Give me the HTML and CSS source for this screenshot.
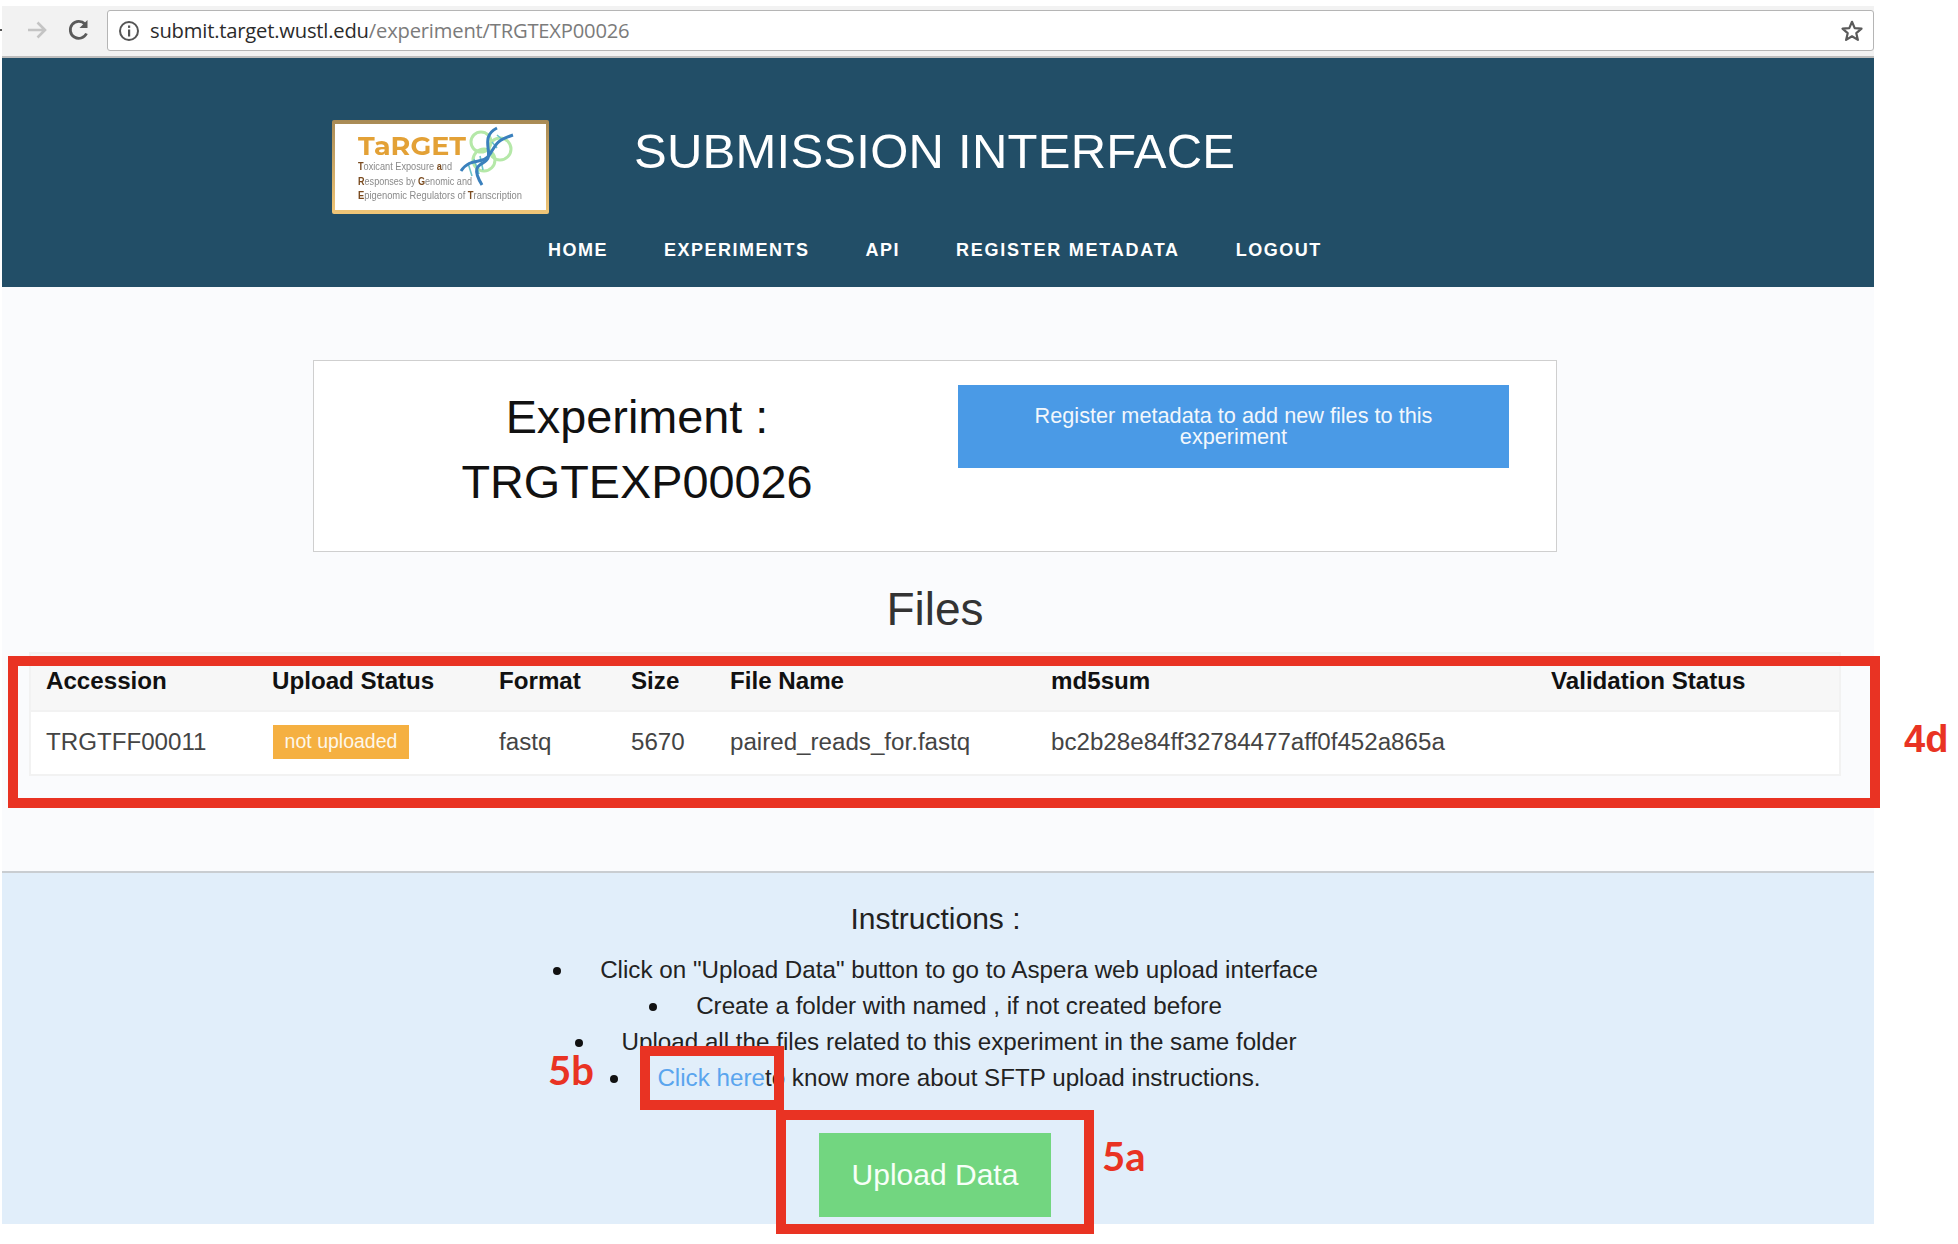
FILE: index.html
```html
<!DOCTYPE html>
<html lang="en">
<head>
<meta charset="utf-8">
<title>Submission Interface</title>
<link rel="stylesheet" href="styles.css">
</head>
<body>
<div class="page">
  <div class="chrome">
    <span class="chrome-dot"></span>
    <svg class="chrome-icon" width="26" height="26" viewBox="0 0 26 26"><path d="M4 13h17M13.500 5.500 21 13l-7.500 7.500" fill="none" stroke="#c4c4c4" stroke-width="2.600"/></svg>
    <svg class="chrome-icon reload" width="26" height="26" viewBox="0 0 26 26"><path d="M20.500 16.500A8.500 8.500 0 1 1 19 7" fill="none" stroke="#5a5a5a" stroke-width="2.800"/><path d="M21.500 3v8h-8z" fill="#5a5a5a"/></svg>
    <div class="omnibox">
      <svg class="info" width="22" height="22" viewBox="0 0 22 22"><circle cx="11" cy="11" r="9" fill="none" stroke="#555" stroke-width="2"/><rect x="10" y="9.500" width="2.200" height="7" fill="#555"/><rect x="10" y="5.500" width="2.200" height="2.400" fill="#555"/></svg>
      <span class="url"><span class="url-host">submit.target.wustl.edu</span>/experiment/TRGTEXP00026</span>
      <svg class="star" width="24" height="24" viewBox="0 0 24 24"><path d="M12 2.800l2.700 6.300 6.800.6-5.200 4.500 1.600 6.700-5.900-3.600-5.900 3.600 1.600-6.700-5.200-4.500 6.800-.6z" fill="none" stroke="#5a5a5a" stroke-width="2.200" stroke-linejoin="round"/></svg>
    </div>
  </div>

  <header class="site-header">
    <div class="brand">
      <svg class="logo" width="217" height="94" viewBox="0 0 217 94">
        <defs><linearGradient id="frame" x1="0" y1="0" x2="0" y2="1"><stop offset="0" stop-color="#a88a55"/><stop offset="1" stop-color="#f0c678"/></linearGradient></defs>
        <rect width="217" height="94" rx="2" fill="url(#frame)"/>
        <rect x="3" y="4" width="211" height="86" fill="#fff"/>
        <g fill="none" stroke="#b5e8a8" stroke-width="3">
          <circle cx="149" cy="22" r="10"/><circle cx="168" cy="29" r="11"/><circle cx="152" cy="40" r="11"/>
        </g>
        <g stroke="#6cc3ca" stroke-width="1.600">
          <path d="M136 43l4 13M142 39l5 15M148 36l3 14M155 28l5 6M160 22l5 6M165 15l6 5"/>
        </g>
        <g fill="none" stroke="#3a80bd" stroke-width="3">
          <path d="M129 51C139 36 151 46 158 34S166 20 181 15"/>
          <path d="M165 8C149 16 159 30 156 38S136 42 150 65"/>
        </g>
        <text class="logo-name" x="26" y="35" textLength="108" lengthAdjust="spacingAndGlyphs">TaRGET</text>
        <text class="logo-line" x="26" y="50" textLength="94" lengthAdjust="spacingAndGlyphs"><tspan class="logo-cap">T</tspan>oxicant Exposure <tspan class="logo-cap">a</tspan>nd</text>
        <text class="logo-line" x="26" y="65" textLength="114" lengthAdjust="spacingAndGlyphs"><tspan class="logo-cap">R</tspan>esponses by <tspan class="logo-cap">G</tspan>enomic and</text>
        <text class="logo-line" x="26" y="79" textLength="164" lengthAdjust="spacingAndGlyphs"><tspan class="logo-cap">E</tspan>pigenomic Regulators of <tspan class="logo-cap">T</tspan>ranscription</text>
      </svg>
      <h1 class="site-title">SUBMISSION INTERFACE</h1>
    </div>
    <nav class="site-nav">
      <a class="nav-link">HOME</a>
      <a class="nav-link">EXPERIMENTS</a>
      <a class="nav-link">API</a>
      <a class="nav-link nav-link-wide">REGISTER METADATA</a>
      <a class="nav-link">LOGOUT</a>
    </nav>
  </header>

  <main class="content">
    <section class="exp-card">
      <h2 class="exp-title">Experiment :<br>TRGTEXP00026</h2>
      <a class="register-btn">Register metadata to add new files to this experiment</a>
    </section>

    <h2 class="files-title">Files</h2>

    <table class="files-table">
      <colgroup>
        <col class="c-acc"><col class="c-status"><col class="c-format"><col class="c-size"><col class="c-name"><col class="c-md5"><col class="c-valid">
      </colgroup>
      <thead>
        <tr><th>Accession</th><th>Upload Status</th><th>Format</th><th>Size</th><th>File Name</th><th>md5sum</th><th>Validation Status</th></tr>
      </thead>
      <tbody>
        <tr><td>TRGTFF00011</td><td><span class="badge">not uploaded</span></td><td>fastq</td><td>5670</td><td>paired_reads_for.fastq</td><td>bc2b28e84ff32784477aff0f452a865a</td><td></td></tr>
      </tbody>
    </table>
  </main>

  <section class="instructions">
    <h3 class="ins-title">Instructions :</h3>
    <ul class="ins-list">
      <li class="ins-item">Click on "Upload Data" button to go to Aspera web upload interface</li>
      <li class="ins-item">Create a folder with named , if not created before</li>
      <li class="ins-item">Upload all the files related to this experiment in the same folder</li>
      <li class="ins-item"><a class="ins-link">Click here</a>to know more about SFTP upload instructions.</li>
    </ul>
    <a class="upload-btn">Upload Data</a>
  </section>
</div>

<div class="mark mark-4d"></div>
<div class="mark mark-5b"></div>
<div class="mark mark-5a"></div>
<span class="mark-label label-4d">4d</span>
<span class="mark-label label-5b">5b</span>
<span class="mark-label label-5a">5a</span>
</body>
</html>
```
FILE: styles.css
```css
* { box-sizing: border-box; }
html, body { margin: 0; padding: 0; background: #fff; }
body { position: relative; width: 1958px; height: 1244px; overflow: hidden; font-family: "Liberation Sans", Arial, sans-serif; }

.page { width: 1872px; margin-left: 2px; padding-top: 6px; }

/* browser bar */
.chrome { height: 52px; background: #f2f2f2; border-bottom: 2px solid #bdbdbd; padding: 4px 0 0 0; display: flex; align-items: flex-start; }
.chrome-dot { width: 2px; height: 2px; margin-top: 19px; margin-left: -2px; background: #555; }
.chrome-icon { margin-top: 7px; margin-left: 22px; flex: none; }
.chrome-icon.reload { margin-left: 16px; }
.omnibox { flex: 1; height: 41px; margin-left: 15px; background: #fff; border: 1.500px solid #b5b5b5; border-radius: 3px; display: flex; align-items: center; padding: 0 9px 0 10px; }
.info { flex: none; }
.url { margin: -2px 0 0 10px; flex: 1; font-family: "Open Sans", sans-serif; font-size: 20.200px; color: #7b7b7b; letter-spacing: -0.200px; }
.url-host { color: #2b2b2b; }
.star { flex: none; }

/* header */
.site-header { height: 229px; background: #224e67; padding-top: 62px; }
.brand { display: flex; align-items: flex-start; padding-left: 330px; }
.logo { flex: none; display: block; filter: blur(0.4px); }
.logo-name { font-family: "Montserrat", "Open Sans", sans-serif; font-weight: 700; font-size: 26px; fill: #e3a136; }
.logo-line { font-family: "Liberation Sans", sans-serif; font-size: 10.500px; fill: #8a8a8a; }
.logo-cap { fill: #7a4a1e; font-weight: 700; }
.site-title { margin: 3px 0 0 85px; font-weight: 400; font-size: 49px; line-height: 56px; letter-spacing: 0.250px; color: #fff; white-space: nowrap; }
.site-nav { display: flex; gap: 56px; padding-left: 546px; margin-top: 26px; }
.nav-link { font-size: 18px; font-weight: 700; line-height: 20px; letter-spacing: 1.500px; color: #fff; }
.nav-link-wide { letter-spacing: 1.750px; }

/* content */
.content { background: #fafbfd; padding-top: 73px; padding-bottom: 95px; }
.exp-card { width: 1244px; height: 192px; margin-left: 311px; background: #fff; border: 1.500px solid #cfcfcf; display: flex; align-items: flex-start; }
.exp-title { width: 646px; margin: 24px -2px 0 0; flex: none; font-weight: 400; font-size: 46.800px; line-height: 65px; color: #111; text-align: center; }
.register-btn { width: 551px; height: 83px; margin-top: 24px; background: #4a9ae6; color: #f2f7fc; font-size: 21.700px; line-height: 21px; text-align: center; padding: 20px 70px 0; }
.files-title { margin: 27px 6px 13px 0; font-weight: 400; font-size: 46px; line-height: 60px; color: #333; text-align: center; }

.files-table { width: 1812px; margin-left: 27px; border-collapse: collapse; table-layout: fixed; background: #fff; border: 2px solid #f2f2f2; font-size: 24.150px; color: #444; }
.c-acc { width: 227px; }
.c-status { width: 227px; }
.c-format { width: 132px; }
.c-size { width: 99px; }
.c-name { width: 321px; }
.c-md5 { width: 500px; }
.files-table th { height: 58px; background: #f7f7f7; color: #111; font-weight: 700; text-align: left; padding: 0 0 2px 15px; border-bottom: 2px solid #f2f2f2; }
.files-table td { height: 64px; padding: 0 0 3px 15px; white-space: nowrap; }
.badge { display: inline-block; width: 136px; height: 34px; margin-left: 1px; background: #f5b041; color: #fdf7ea; font-size: 19.500px; line-height: 32px; text-align: center; }

/* instructions */
.instructions { height: 353px; background: #e1eefa; border-top: 2px solid #c9cdd1; padding-top: 26px; text-align: center; }
.ins-title { margin: 0 5px 0 0; font-weight: 400; font-size: 30px; line-height: 40px; color: #222; }
.ins-list { list-style: none; margin: 13px 5px 37px 0; padding: 0; }
.ins-item { font-size: 24.200px; line-height: 36px; color: #222; }
.ins-item::before { content: ""; display: inline-block; width: 8px; height: 8px; border-radius: 50%; background: #111; margin-right: 39px; vertical-align: 3px; }
.ins-link { color: #5aa5ee; }
.upload-btn { display: block; width: 232px; height: 84px; margin: 0 0 0 817px; background: #72d680; color: #f7fff8; font-size: 30px; line-height: 84px; text-align: center; }

/* annotations lying over the shot */
.mark { position: absolute; border: 10px solid #e93323; }
.mark-4d { left: 8px; top: 656px; width: 1872px; height: 152px; }
.mark-5b { left: 640px; top: 1046px; width: 144px; height: 64px; }
.mark-5a { left: 776px; top: 1110px; width: 318px; height: 124px; }
.mark-label { position: absolute; color: #e93323; font-family: "Lato", sans-serif; font-weight: 700; font-size: 40px; line-height: 44px; }
.label-4d { left: 1904px; top: 717px; font-family: "Liberation Sans", sans-serif; font-size: 38px; }
.label-5b { left: 548px; top: 1048px; }
.label-5a { left: 1102px; top: 1134px; }
```
